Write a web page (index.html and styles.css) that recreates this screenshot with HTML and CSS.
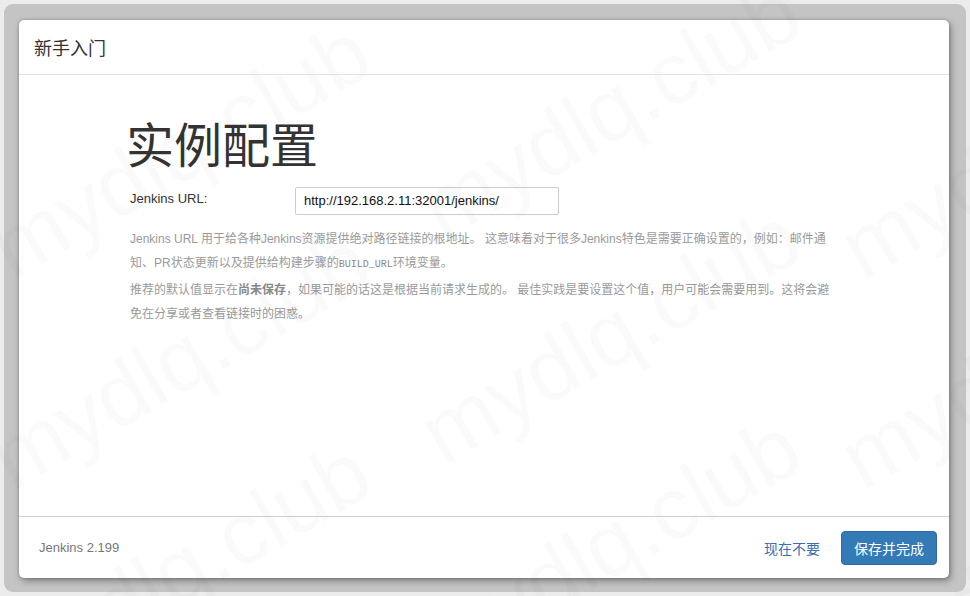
FILE: index.html
```html
<!DOCTYPE html>
<html lang="zh-CN">
<head>
<meta charset="utf-8">
<title>新手入门</title>
<link rel="stylesheet" href="styles.css">
</head>
<body>
<div class="frame">
  <div class="modal">
    <div class="modal-header">
      <h4 class="modal-title">新手入门</h4>
    </div>
    <div class="modal-body">
      <div class="config">
        <h1 class="config-title">实例配置</h1>
        <div class="form-row">
          <label class="form-label" for="url">Jenkins URL:</label>
          <input class="form-input" id="url" type="text" value="http://192.168.2.11:32001/jenkins/">
        </div>
        <div class="help">
          <p>Jenkins URL 用于给各种Jenkins资源提供绝对路径链接的根地址。 这意味着对于很多Jenkins特色是需要正确设置的，例如：邮件通知、PR状态更新以及提供给构建步骤的<code>BUILD_URL</code>环境变量。</p>
          <p>推荐的默认值显示在<strong>尚未保存</strong>，如果可能的话这是根据当前请求生成的。 最佳实践是要设置这个值，用户可能会需要用到。这将会避免在分享或者查看链接时的困惑。</p>
        </div>
      </div>
    </div>
    <div class="modal-footer">
      <span class="version">Jenkins 2.199</span>
      <div class="actions">
        <a class="btn-link" href="#">现在不要</a>
        <button class="btn-primary" type="button">保存并完成</button>
      </div>
    </div>
  </div>
</div>
<div class="watermark" aria-hidden="true">
  <span class="wm wm-a">mydlq.club</span>
  <span class="wm wm-b">mydlq.club</span>
  <span class="wm wm-c">mydlq.club</span>
  <span class="wm wm-d">mydlq.club</span>
  <span class="wm wm-e">mydlq.club</span>
  <span class="wm wm-f">mydlq.club</span>
  <span class="wm wm-g">mydlq.club</span>
  <span class="wm wm-h">mydlq.club</span>
  <span class="wm wm-i">mydlq.club</span>
</div>
</body>
</html>
```
FILE: styles.css
```css
html, body {
  margin: 0;
  padding: 0;
}
body {
  width: 970px;
  height: 596px;
  overflow: hidden;
  position: relative;
  background: #ececec;
  font-family: "Liberation Sans", "Noto Sans CJK SC", sans-serif;
  color: #333;
}
.frame {
  margin: 4px;
  height: 588px;
  box-sizing: border-box;
  background: #c4c4c4;
  border-radius: 9px;
  padding: 16px 17px 14px 15px;
}
.modal {
  height: 100%;
  box-sizing: border-box;
  background: #fff;
  border-radius: 5px;
  box-shadow: 0 0 3px rgba(0,0,0,.25), 2px 3px 7px rgba(0,0,0,.35);
  display: flex;
  flex-direction: column;
}
.modal-header {
  height: 55px;
  box-sizing: border-box;
  border-bottom: 1px solid #e5e5e5;
  padding: 0 15px;
  display: flex;
  align-items: center;
}
.modal-title {
  margin: 0;
  font-size: 18px;
  font-weight: normal;
  color: #333;
  font-family: "Noto Sans CJK SC", sans-serif;
}
.modal-body {
  flex: 1;
  padding: 41px 0 0 111px;
}
.config {
  width: 706px;
}
.config-title {
  margin: 0 0 18px -4px;
  font-size: 48px;
  line-height: 1.1;
  font-weight: normal;
  color: #333;
  font-family: "Noto Sans CJK SC", sans-serif;
}
.form-row {
  display: flex;
  align-items: center;
}
.form-label {
  width: 165px;
  font-size: 13px;
  color: #333;
  margin-top: -5px;
}
.form-input {
  width: 264px;
  height: 28px;
  box-sizing: border-box;
  border: 1px solid #ccc;
  border-radius: 2px;
  padding: 0 8px;
  font-family: "Liberation Sans", sans-serif;
  font-size: 13px;
  color: #111;
  margin: 0;
}
.help {
  margin-top: 12px;
  font-size: 12px;
  line-height: 24.4px;
  color: #9a9a9a;
}
.help p {
  margin: 0;
}
.help strong {
  color: #8a8a8a;
}
.help code {
  font-family: "Liberation Mono", monospace;
  font-size: 10px;
  color: #8a8a8a;
}
.modal-footer {
  height: 62px;
  box-sizing: border-box;
  border-top: 1px solid #cfcfcf;
  padding: 0 12px 0 20px;
  display: flex;
  align-items: center;
  justify-content: space-between;
}
.version {
  font-size: 13px;
  color: #777;
}
.actions {
  display: flex;
  align-items: center;
  gap: 21px;
}
.btn-link {
  color: #3a6fb0;
  text-decoration: none;
  font-size: 14px;
  font-family: "Noto Sans CJK SC", sans-serif;
}
.btn-primary {
  height: 34px;
  padding: 0 12px;
  background: #337ab7;
  border: 1px solid #2e6da4;
  border-radius: 4px;
  color: #fff;
  font-size: 14px;
  font-family: "Noto Sans CJK SC", sans-serif;
}
.watermark {
  position: absolute;
  inset: 0;
  pointer-events: none;
  overflow: hidden;
}
.wm {
  position: absolute;
  width: 440px;
  margin-left: -220px;
  margin-top: -50px;
  text-align: center;
  font-size: 88px;
  line-height: 100px;
  color: rgba(0,0,0,.018);
  transform: rotate(-30deg);
  white-space: nowrap;
}
.wm-a { left: 180px; top: 150px; }
.wm-b { left: 610px; top: 110px; }
.wm-c { left: 1030px; top: 150px; }
.wm-d { left: 180px; top: 360px; }
.wm-e { left: 610px; top: 335px; }
.wm-f { left: 1030px; top: 360px; }
.wm-g { left: 180px; top: 570px; }
.wm-h { left: 610px; top: 545px; }
.wm-i { left: 1030px; top: 570px; }
```
